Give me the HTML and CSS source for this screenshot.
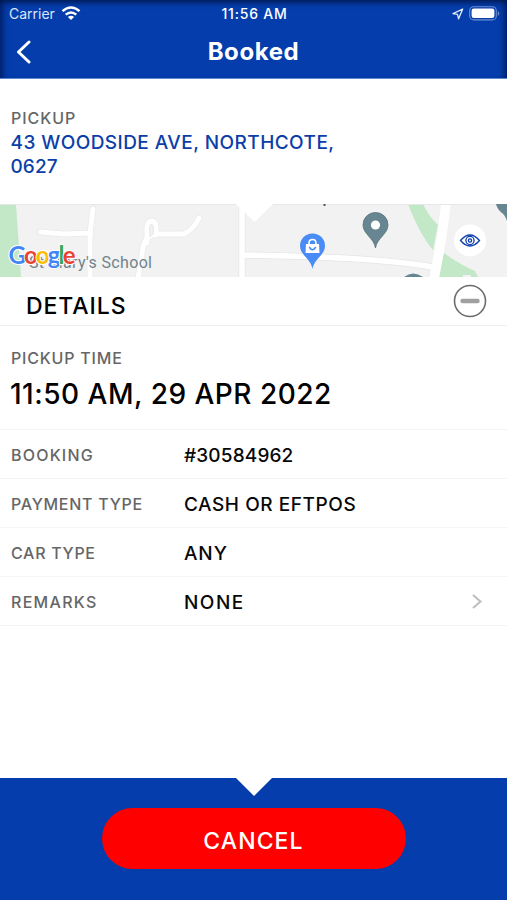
FILE: index.html
```html
<!DOCTYPE html>
<html lang="en">
<head>
<meta charset="utf-8">
<title>Booked</title>
<link rel="stylesheet" href="styles.css">
</head>
<body>
<div class="app">
  <header class="header">
    <div class="status">
      <div class="carrier"><span>Carrier</span>
        <svg width="20" height="15" viewBox="0 0 20 15" fill="none" stroke="#fff" stroke-width="2.4"><path d="M1.500 5.200Q10-2 18.500 5.200M4.700 8.600Q10 4.200 15.300 8.600"/><path d="M10 14L6.900 10.900Q10 8.500 13.100 10.900Z" fill="#fff" stroke="none"/></svg>
      </div>
      <span class="clock">11:56 AM</span>
      <div class="indicators">
        <svg width="12" height="12" viewBox="0 0 12 12" fill="none" stroke="#e4ebfa" stroke-width="1.300" stroke-linejoin="round"><path d="M10.700 1L1 5.600L5.500 6.300L6.600 10.800Z"/></svg>
        <svg width="31" height="15" viewBox="0 0 31 15"><rect x=".7" y=".7" width="26.600" height="13.200" rx="4" fill="none" stroke="#6f8fd0" stroke-width="1.100"/><rect x="2.600" y="2.600" width="22.800" height="9.400" rx="2.200" fill="#fff"/><path d="M28.800 5v5q1.500-1 1.500-2.500t-1.500-2.500" fill="#6f8fd0"/></svg>
      </div>
    </div>
    <div class="nav">
      <svg class="back" width="16" height="26" viewBox="0 0 16 26" fill="none" stroke="#fff" stroke-width="3" stroke-linecap="round" stroke-linejoin="round"><path d="M14 3L3.500 13L14 23"/></svg>
      <h1 class="title">Booked</h1>
    </div>
  </header>

  <section class="pickup">
    <div class="label pickup-label">PICKUP</div>
    <div class="address"><span class="street">43 WOODSIDE AVE, NORTHCOTE,</span><br><span class="postcode">0627</span></div>
  </section>

  <svg class="map" width="507" height="73" viewBox="0 0 507 73">
    <rect width="507" height="73" fill="#f2f2f2"/>
    <path d="M0 0H16L21 73H0Z" fill="#c3e8c7"/>
    <path d="M408 0H423Q430 14 438 21L433 46Q420 31 408 0ZM444 49Q462 62 475 67L478 73H438Z" fill="#c3e8c7"/>
    <g fill="none" stroke="#e8e9ea" stroke-width="6.500" stroke-linejoin="round" stroke-linecap="round">
      <path d="M41 28L64 30L91 29M93 5L90 29V75M199 14Q194 25 184 30H156Q146 31 143 43L138 75M147 39V22Q148 17 152 17Q156 18 156 23V31"/>
    </g>
    <g fill="none" stroke="#fff" stroke-width="5" stroke-linejoin="round" stroke-linecap="round">
      <path d="M41 28L64 30L91 29M93 5L90 29V75M199 14Q194 25 184 30H156Q146 31 143 43L138 75M147 39V22Q148 17 152 17Q156 18 156 23V31"/>
    </g>
    <path d="M149.800 22.500Q151.500 20 153.300 22.500V30L149.800 33Z" fill="#f2f2f2" stroke="#e4e5e6" stroke-width=".8"/>
    <path d="M242 -2V75M242 51Q380 53 432 63" fill="none" stroke="#e5e6e7" stroke-width="7"/>
    <path d="M242 -2V75M242 51Q380 53 432 63" fill="none" stroke="#fff" stroke-width="5.500"/>
    <path d="M446 -2Q443 30 434 75" fill="none" stroke="#fff" stroke-width="9.500"/>
    <rect x="463" y="71" width="8" height="2" fill="#f2f2f2"/>
    <path d="M0 .5H507" stroke="#e6e8e7"/>
    <path d="M236 0H273L254.500 18Z" fill="#fff"/>
    <path d="M323.500 0h2v2h-2z" fill="#555"/>
    <path d="M375.500 8.500A12.300 12.300 0 0 1 388 21C388 30 377 34 375.500 44C374 34 363 30 363 21A12.300 12.300 0 0 1 375.500 8.500Z" fill="#688691" stroke="#56747e" stroke-width=".8"/>
    <circle cx="375.500" cy="21" r="4.600" fill="#fff"/>
    <path d="M496 0H507V17Q505 11 502 9Q497 5 496 0M404 73Q413 66 423 73Z" fill="#688691"/>
    <path d="M312.500 29.500A12.300 12.300 0 0 1 325 42C325 51 314 55 312.500 65C311 55 300 51 300 42A12.300 12.300 0 0 1 312.500 29.500Z" fill="#4a8cf6"/>
    <path d="M306 40H319L319.500 49H305.500Z" fill="#fff"/>
    <path d="M309 41V39Q309 35.500 312.500 35.500Q316 35.500 316 39V41" fill="none" stroke="#fff" stroke-width="1.600"/>
    <path d="M309.200 43Q312.500 48.500 315.800 43" fill="none" stroke="#4a8cf6" stroke-width="1.500"/>
    <text class="place" x="29" y="64" textLength="123">St Mary's School</text>
    <text class="brand" x="8.500" y="60" textLength="67"><tspan fill="#4285f4">G</tspan><tspan fill="#ea4335">o</tspan><tspan fill="#fbbc05">o</tspan><tspan fill="#4285f4">g</tspan><tspan fill="#34a853">l</tspan><tspan fill="#ea4335">e</tspan></text>
    <circle cx="470" cy="36.500" r="16" fill="#fff"/>
    <g fill="none" stroke="#0b3dab" stroke-width="1.300"><path d="M460.500 36.500Q470 25.500 479.500 36.500Q470 47.500 460.500 36.500Z"/><circle cx="470" cy="36.500" r="4.100"/><circle cx="470" cy="36.500" r="1.600"/></g>
  </svg>

  <section class="details-bar">
    <h2 class="details-title">DETAILS</h2>
    <svg width="34" height="34" viewBox="0 0 34 34"><circle cx="17" cy="17" r="15.500" fill="none" stroke="#6b6b6b" stroke-width="1.600"/><path d="M9.500 17H24.500" stroke="#a0a0a0" stroke-width="4.400" stroke-linecap="round"/></svg>
  </section>

  <section class="time">
    <div class="label time-label">PICKUP TIME</div>
    <div class="datetime">11:50 AM, 29 APR 2022</div>
  </section>

  <dl class="rows">
    <div class="row"><dt class="label booking">BOOKING</dt><dd class="value number">#30584962</dd></div>
    <div class="row"><dt class="label payment">PAYMENT TYPE</dt><dd class="value cash">CASH OR EFTPOS</dd></div>
    <div class="row"><dt class="label car">CAR TYPE</dt><dd class="value any">ANY</dd></div>
    <div class="row"><dt class="label remarks">REMARKS</dt><dd class="value none">NONE</dd>
      <svg class="chevron" width="12" height="16" viewBox="0 0 12 16" fill="none" stroke="#bdbdbd" stroke-width="2"><path d="M2 1L9.500 7.500L2 14"/></svg></div>
  </dl>

  <footer class="footer">
    <svg class="notch" width="36" height="18" viewBox="0 0 36 18"><path d="M0 0H36L18 18Z" fill="#fff"/></svg>
    <button class="cancel">CANCEL</button>
  </footer>
</div>
</body>
</html>
```

FILE: styles.css
```css
* { box-sizing: border-box; }
body { margin: 0; background: #fff; font-family: Inter, "Liberation Sans", sans-serif; }
svg { display: block; flex: none; }
h1, h2, dl, dd { margin: 0; }
.app { width: 507px; height: 900px; display: flex; flex-direction: column; overflow: hidden; }

.header {
  height: 79px; flex: none; color: #fff; background: #053eac;
  box-shadow: inset 0 7px 6px -5px #001544, inset 8px 0 6px -5px #001f69, inset -8px 0 6px -5px #001f69;
  border-bottom: 1px solid #5c87d1;
}
.status { height: 27px; display: grid; grid-template-columns: 1fr auto 1fr; align-items: center; padding: 0 7px 0 9px; font-size: 14px; }
.carrier { display: flex; gap: 6px; align-items: center; color: #dce5f8; }
.carrier svg { margin-top: -1px; }
.clock { font-weight: 500; font-size: 14px; letter-spacing: .8px; }
.indicators { display: flex; justify-content: flex-end; align-items: center; gap: 5px; }
.nav { height: 50px; display: grid; grid-template-columns: 1fr auto 1fr; align-items: center; padding: 0 15px; }
.title { font-size: 24px; line-height: 30px; font-weight: 700; letter-spacing: .6px; }

.label { color: #666; font-size: 16px; line-height: 20px; font-weight: 450; }
.pickup-label { letter-spacing: .95px; }
.pickup { height: 125px; flex: none; padding: 29px 11px 0; }
.address { color: #0b3ea8; font-size: 19px; line-height: 23.5px; font-weight: 500; padding-top: 3px; margin-left: -.5px; white-space: nowrap; }
.street { letter-spacing: .45px; }
.postcode { letter-spacing: .1px; }
.map { flex: none; }
.place { font: 16px Roboto, sans-serif; fill: #70838b; }
.brand { font: 700 24px Lato, sans-serif; stroke: #fff; stroke-width: 2px; stroke-linejoin: round; paint-order: stroke; }

.details-bar { height: 49px; flex: none; display: flex; justify-content: space-between; align-items: center; padding: 0 20px 0 26px; border-bottom: 1px solid #efefef; }
.details-title { font-size: 23px; line-height: 28px; font-weight: 500; padding-top: 9px; letter-spacing: .95px; }
.time { height: 104px; flex: none; padding: 22px 11px 0; border-bottom: 1px solid #f4f4f4; }
.time-label { letter-spacing: .8px; }
.datetime { font-size: 28px; line-height: 34px; font-weight: 500; padding-top: 9px; white-space: nowrap; letter-spacing: .5px; margin-left: -1px; }
.rows { flex: 1; }
.row { height: 49px; display: grid; grid-template-columns: 173px 1fr 12px; align-items: center; padding: 2px 24px 0 11px; border-bottom: 1px solid #f4f4f4; white-space: nowrap; }
.value { font-size: 19px; line-height: 24px; font-weight: 500; color: #080808; padding-top: 1px; }
.booking { letter-spacing: 1.2px; }
.payment { letter-spacing: .73px; }
.car { letter-spacing: .7px; }
.remarks { letter-spacing: 1.3px; }
.number { letter-spacing: .15px; }
.cash { letter-spacing: .56px; }
.any { letter-spacing: .9px; }
.none { letter-spacing: 1.5px; }

.footer { position: relative; height: 122px; flex: none; background: #053eac; display: flex; justify-content: center; padding-top: 30px; }
.notch { position: absolute; top: 0; left: 236px; }
.cancel { width: 304px; height: 61px; border: 0; border-radius: 31px; background: #f00; color: #fff; font: 500 23px Inter, sans-serif; letter-spacing: 1.1px; padding: 4px 0 0; }
```
